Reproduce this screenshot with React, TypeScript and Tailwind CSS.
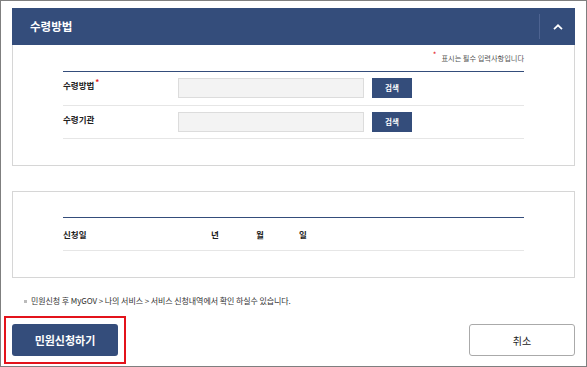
import React from 'react';

const NAVY = 'bg-[#344d7b]';

const SearchRow = ({ label, required, last }: any) => (
  <div className={`flex items-start border-b border-[#e6e6e6] ${last ? 'h-[33px]' : 'h-[34px]'}`}>
    <div className="w-[115px] pt-[7px] text-[8.5px] font-bold text-[#222] flex items-start">
      {label}
      {required && <span className="text-[#e4141b] text-[8px] leading-none ml-[1px] -mt-[1px]">*</span>}
    </div>
    <div className="mt-[6px] w-[186px] h-[20px] bg-[#f3f3f3] border border-[#dcdcdc]" />
    <button className={`mt-[6px] ml-[8px] w-[40px] h-[20px] ${NAVY} text-white text-[7.5px] font-bold`}>검색</button>
  </div>
);

const App: React.FC = () => {
  return (
    <div
      className="w-[587px] h-[367px] border border-[#7f7f7f] bg-white px-[11px] pt-[7px] overflow-hidden"
      style={{ fontFamily: '"Noto Sans CJK KR", "Noto Sans", sans-serif' }}
    >
      {/* header */}
      <div className={`h-[37px] ${NAVY} flex items-center justify-between pl-[18px]`}>
        <h2 className="text-white text-[11.5px] font-bold">수령방법</h2>
        <div className="flex items-center h-full">
          <div className="w-px h-[25px] bg-[#4d6391]" />
          <div className="w-[35px] flex justify-center">
            <svg width="10" height="6" viewBox="0 0 10 6" fill="none">
              <path d="M1 5.2 L5 1.3 L9 5.2" stroke="white" strokeWidth="1.7" />
            </svg>
          </div>
        </div>
      </div>

      {/* panel 1 */}
      <div className="border border-t-0 border-[#d6d6d6] px-[50px] pb-[26px]">
        <div className="h-[26px] flex items-center justify-end text-[7.2px] text-[#555]">
          <span className="text-[#e4141b] text-[8px] leading-none -mt-[6px] mr-[5px]">*</span>
          표시는 필수 입력사항입니다
        </div>
        <div className="border-t border-[#344d7b]">
          <SearchRow label="수령방법" required />
          <SearchRow label="수령기관" last />
        </div>
      </div>

      {/* panel 2 */}
      <div className="mt-[25px] border border-[#d6d6d6] px-[50px] pt-[25px] pb-[26px]">
        <div className="border-t border-[#344d7b] border-b border-b-[#e6e6e6] h-[34px] flex items-center text-[8.5px] font-bold text-[#222]">
          <span className="w-[148px]">신청일</span>
          <span className="w-[45px]">년</span>
          <span className="w-[43px]">월</span>
          <span>일</span>
        </div>
      </div>

      {/* note */}
      <div className="mt-[17px] pl-[12px] flex items-center gap-[4px] text-[8px] text-[#333] tracking-[-0.01em]">
        <span className="w-[3px] h-[3px] bg-[#bbb]" />
        민원신청 후 MyGOV &gt; 나의 서비스 &gt; 서비스 신청내역에서 확인 하실수 있습니다.
      </div>

      {/* buttons */}
      <div className="mt-[17px] flex justify-between">
        <div className="-m-[8px] p-[6px] border-2 border-[#e3131b]">
          <button className={`block w-[106px] h-[32px] ${NAVY} rounded-[3px] text-white text-[11px] font-bold`}>
            민원신청하기
          </button>
        </div>
        <button className="w-[106px] h-[32px] bg-white border border-[#aaaaaa] rounded-[3px] text-[#222] text-[10px]">
          취소
        </button>
      </div>
    </div>
  );
};

export default App;
